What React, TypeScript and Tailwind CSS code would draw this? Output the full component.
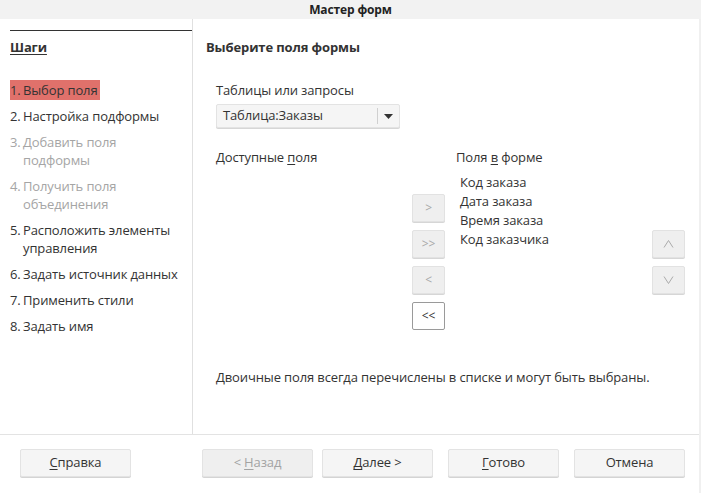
import React from 'react';

const font = { fontFamily: '"Open Sans", "Noto Sans", sans-serif' };

const steps = [
  { n: '1.', lines: ['Выбор поля'], active: true },
  { n: '2.', lines: ['Настройка подформы'] },
  { n: '3.', lines: ['Добавить поля', 'подформы'], disabled: true },
  { n: '4.', lines: ['Получить поля', 'объединения'], disabled: true },
  { n: '5.', lines: ['Расположить элементы', 'управления'] },
  { n: '6.', lines: ['Задать источник данных'] },
  { n: '7.', lines: ['Применить стили'] },
  { n: '8.', lines: ['Задать имя'] },
];

const SmallBtn = ({
  children,
  focused,
}: {
  children: React.ReactNode;
  focused?: boolean;
}) => (
  <div
    className={
      focused
        ? 'w-[33px] h-[28px] flex items-center justify-center rounded-[2px] border border-[#9a9a9a] bg-white text-[12px] text-[#333]'
        : 'w-[33px] h-[28px] flex items-center justify-center rounded-[2px] border border-[#e2e2e2] bg-[#efefef] shadow-[0_1px_0_#d6d6d6] text-[12px] text-[#a8a8a8]'
    }
  >
    {children}
  </div>
);

const FooterBtn = ({
  children,
  disabled,
  className = '',
}: {
  children: React.ReactNode;
  disabled?: boolean;
  className?: string;
}) => (
  <div
    className={`w-[111px] h-[28px] flex items-center justify-center rounded-[2px] border border-[#e3e3e3] shadow-[0_1px_0_#d4d4d4] text-[13px] ${
      disabled ? 'bg-[#efefef] text-[#a3a3a3]' : 'bg-[#f5f5f5] text-[#333]'
    } ${className}`}
  >
    {children}
  </div>
);

export default function App() {
  return (
    <div className="w-[701px] h-[493px] bg-white flex flex-col overflow-hidden text-[#333] tracking-[-0.13px]" style={font}>
      {/* заголовок окна */}
      <div className="h-[19px] bg-[#f2f2f2] flex items-center justify-center text-[12px] font-bold text-[#222] leading-none">
        Мастер форм
      </div>

      <div className="flex flex-1">
        <div className="flex flex-col w-[699px]">
          <div className="flex h-[415px]">
            {/* шаги */}
            <div className="w-[193px] border-r border-[#e0e0e0] pl-[10px] flex flex-col">
              <div className="h-px bg-[#333] mt-[11px]" />
              <div className="mt-[7px] text-[13px] leading-[18px] font-bold underline underline-offset-2">Шаги</div>
              <div className="mt-[25px] flex flex-col gap-[8px]">
                {steps.map((s) => (
                  <div
                    key={s.n}
                    className={`flex text-[13px] leading-[18px] whitespace-nowrap ${
                      s.disabled ? 'text-[#a5a5a5]' : 'text-[#333]'
                    }`}
                  >
                    {s.active ? (
                      <div className="flex bg-[#e0716b] pr-[2px] -my-px py-px">
                        <span className="w-[13px]">{s.n}</span>
                        <span>{s.lines[0]}</span>
                      </div>
                    ) : (
                      <>
                        <span className="w-[13px]">{s.n}</span>
                        <div className="flex flex-col">
                          {s.lines.map((l) => (
                            <span key={l}>{l}</span>
                          ))}
                        </div>
                      </>
                    )}
                  </div>
                ))}
              </div>
            </div>

            {/* содержимое */}
            <div className="flex-1 pt-[19px] pl-[13px] flex flex-col">
              <div className="text-[13px] leading-[18px] font-bold">Выберите поля формы</div>
              <div className="pl-[10px] flex flex-col">
                <div className="mt-[25px] text-[13px] leading-[18px]">Таблицы или запросы</div>
                <div className="mt-[5px] w-[184px] h-[24px] rounded-[2px] border border-[#e3e3e3] bg-[#f5f5f5] shadow-[0_1px_0_#d6d6d6] flex items-center">
                  <span className="flex-1 pl-[6px] text-[13px]">Таблица:Заказы</span>
                  <div className="w-px h-[16px] bg-[#d0d0d0]" />
                  <div className="w-[21px] flex justify-center">
                    <svg width="9" height="5" viewBox="0 0 9 5">
                      <polygon points="0,0 9,0 4.5,5" fill="#333" />
                    </svg>
                  </div>
                </div>

                <div className="mt-[20px] flex">
                  <div className="w-[196px] text-[13px] leading-[18px]">
                    Доступные <span className="underline underline-offset-2">п</span>оля
                  </div>
                  <div className="w-[33px] mt-[46px] flex flex-col gap-[8px]">
                    <SmallBtn>&gt;</SmallBtn>
                    <SmallBtn>&gt;&gt;</SmallBtn>
                    <SmallBtn>&lt;</SmallBtn>
                    <SmallBtn focused>&lt;&lt;</SmallBtn>
                  </div>
                  <div className="w-[196px] ml-[11px] flex flex-col">
                    <div className="text-[13px] leading-[18px]">
                      Поля <span className="underline underline-offset-2">в</span> форме
                    </div>
                    <div className="mt-[7px] pl-[4px] text-[13px] leading-[19px] flex flex-col">
                      <span>Код заказа</span>
                      <span>Дата заказа</span>
                      <span>Время заказа</span>
                      <span>Код заказчика</span>
                    </div>
                  </div>
                  <div className="w-[33px] mt-[82px] flex flex-col gap-[8px]">
                    <SmallBtn>
                      <svg width="11" height="8" viewBox="0 0 11 8">
                        <polyline points="1,7.5 5.5,0.5 10,7.5" fill="none" stroke="#aaa" strokeWidth="1" />
                      </svg>
                    </SmallBtn>
                    <SmallBtn>
                      <svg width="11" height="8" viewBox="0 0 11 8">
                        <polyline points="1,0.5 5.5,7.5 10,0.5" fill="none" stroke="#aaa" strokeWidth="1" />
                      </svg>
                    </SmallBtn>
                  </div>
                </div>

                <div className="mt-[38px] text-[13px] leading-[18px]">
                  Двоичные поля всегда перечислены в списке и могут быть выбраны.
                </div>
              </div>
            </div>
          </div>

          {/* кнопки */}
          <div className="flex-1 border-t border-[#e3e3e3] flex items-start pt-[14px]">
            <FooterBtn className="ml-[20px]">
              <span className="underline underline-offset-2">С</span>правка
            </FooterBtn>
            <FooterBtn disabled className="ml-[71px]">
              &lt; <span className="underline underline-offset-2 ml-[3px]">Н</span>азад
            </FooterBtn>
            <FooterBtn className="ml-[9px]">
              <span className="underline underline-offset-2">Д</span>алее &gt;
            </FooterBtn>
            <FooterBtn className="ml-[15px]">
              <span className="underline underline-offset-2">Г</span>отово
            </FooterBtn>
            <FooterBtn className="ml-[15px]">Отмена</FooterBtn>
          </div>
        </div>
        <div className="w-[2px] bg-[#f0f0f0]" />
      </div>
    </div>
  );
}
